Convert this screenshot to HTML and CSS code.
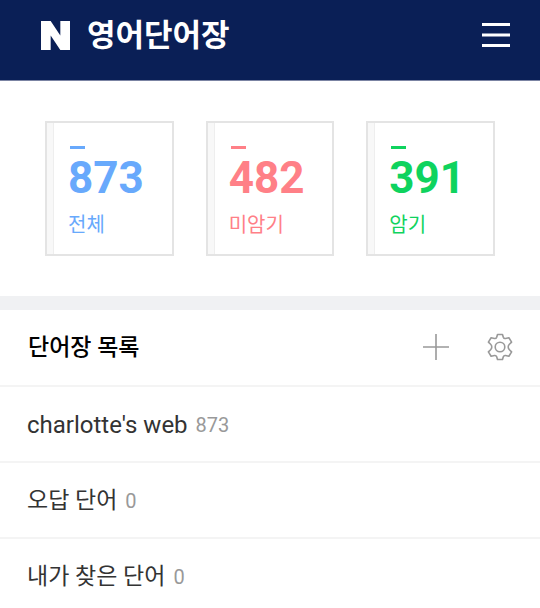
FILE: index.html
```
<!DOCTYPE html>
<html lang="ko">
<head>
    <title>영어단어장</title>
    <meta charset="utf-8">
    <meta name="viewport" content="width=device-width, initial-scale=1">
    <link rel="stylesheet" href="styles.css">
</head>
<body>
    <header class="header">
        <h1 class="header-title">
            <svg class="logo" viewBox="0 0 30 30" aria-hidden="true"><path d="M0 0h10l10 15V0h10v30H20L10 15v15H0z"/></svg>
            <span>영어단어장</span>
        </h1>
        <button class="icon-button menu-button" type="button" aria-label="메뉴">
            <svg width="28" height="24" viewBox="0 0 28 24"><path d="M0 1.5h28M0 12h28M0 22.5h28"/></svg>
        </button>
    </header>

    <section class="summary">
        <div class="card total">
            <strong class="card-count">873</strong>
            <span class="card-label">전체</span>
        </div>
        <div class="card unlearned">
            <strong class="card-count">482</strong>
            <span class="card-label">미암기</span>
        </div>
        <div class="card learned">
            <strong class="card-count">391</strong>
            <span class="card-label">암기</span>
        </div>
    </section>

    <section class="wordbook">
        <div class="wordbook-head">
            <h2>단어장 목록</h2>
            <div class="tools">
                <button class="icon-button" type="button" aria-label="추가">
                    <svg width="28" height="28" viewBox="0 0 28 28"><path d="M14 1v26M1 14h26"/></svg>
                </button>
                <button class="icon-button" type="button" aria-label="설정">
                    <svg width="28" height="28" viewBox="0 0 28 28">
                        <path d="M11.5 1.500h5l.8 2.700q.6 1.600 2.200 1.300l3.400-.7 2.700 4.300-2.200 2.200q-1.200 1.200-1.200 2.700t1.200 2.700l2.200 2.200-2.700 4.300-3.400-.7q-1.600-.3-2.200 1.300l-.8 2.700h-5l-.8-2.700q-.6-1.600-2.200-1.300l-3.400.7-2.700-4.300 2.200-2.200q1.200-1.200 1.200-2.700t-1.200-2.700l-2.200-2.200 2.700-4.300 3.400.7q1.600.3 2.200-1.300z"/>
                        <circle cx="14" cy="14" r="4.800"/>
                    </svg>
                </button>
            </div>
        </div>
        <ul class="wordbook-list">
            <li><a href="#"><span class="name-en">charlotte's web</span> <span class="count">873</span></a></li>
            <li><a href="#">오답 단어 <span class="count">0</span></a></li>
            <li><a href="#">내가 찾은 단어 <span class="count">0</span></a></li>
        </ul>
    </section>
</body>
</html>
```

FILE: styles.css
```
* {
    box-sizing: border-box;
}
body {
    margin: 0;
    background-color: #fff;
    color: #333;
    font-family: Roboto, "Noto Sans CJK KR", sans-serif;
}
h1, h2, ul {
    margin: 0;
    padding: 0;
}
.header {
    display: flex;
    align-items: center;
    justify-content: space-between;
    padding: 10px 30px 20px 41px;
    background-color: #0a1f56;
    border-bottom: 1px solid #7b84a3;
}
.header-title {
    display: flex;
    align-items: center;
    gap: 17px;
    color: #fff;
    font-size: 31px;
    font-weight: 700;
    line-height: 50px;
}
.header-title span {
    padding-top: 2px;
    line-height: 48px;
}
.logo {
    width: 29px;
    height: 29px;
    fill: #fff;
}
.icon-button {
    display: block;
    padding: 0;
    border: none;
    background: none;
    cursor: pointer;
}
.icon-button svg {
    display: block;
    fill: none;
    stroke: #999;
    stroke-width: 1.6;
    stroke-linejoin: round;
}
.menu-button svg {
    stroke: #fff;
    stroke-width: 3;
}
.summary {
    display: grid;
    grid-template-columns: repeat(3, 1fr);
    gap: 32px;
    padding: 40px 45px;
    border-bottom: 14px solid #f0f1f3;
}
.card {
    display: flex;
    flex-direction: column;
    padding: 23px 8px 12px 22px;
    border: 2px solid #e4e4e4;
    background: linear-gradient(to right, #f8f8f8 6px, #eee 6px, #eee 7px, #fff 7px);
}
.card::before {
    content: "";
    width: 15px;
    height: 3px;
    margin-left: 1px;
    background-color: currentColor;
}
.card-count {
    margin-left: -1px;
    font-size: 44px;
    font-weight: 700;
    line-height: 59px;
}
.card-label {
    margin-left: -1px;
    padding-top: 1px;
    font-size: 20px;
    line-height: 33px;
}
.total {
    color: #68a9fc;
}
.unlearned {
    color: #ff8087;
}
.learned {
    color: #0fd35e;
}
.wordbook-head {
    display: flex;
    align-items: center;
    justify-content: space-between;
    padding: 0 26px 0 28px;
    border-bottom: 2px solid #f4f4f4;
    line-height: 75px;
}
.wordbook-head h2 {
    color: #000;
    font-size: 23px;
    font-weight: 500;
}
.tools {
    display: flex;
    gap: 36px;
    padding-bottom: 2px;
}
.wordbook-list {
    list-style: none;
}
.wordbook-list li {
    border-bottom: 2px solid #f4f4f4;
}
.wordbook-list a {
    display: flex;
    align-items: center;
    gap: 8px;
    padding: 2px 27px 0;
    color: #333;
    font-size: 23px;
    line-height: 72px;
    text-decoration: none;
}
.wordbook-list .name-en {
    font-size: 24px;
}
.wordbook-list .count {
    color: #999;
    font-size: 20px;
}
```
